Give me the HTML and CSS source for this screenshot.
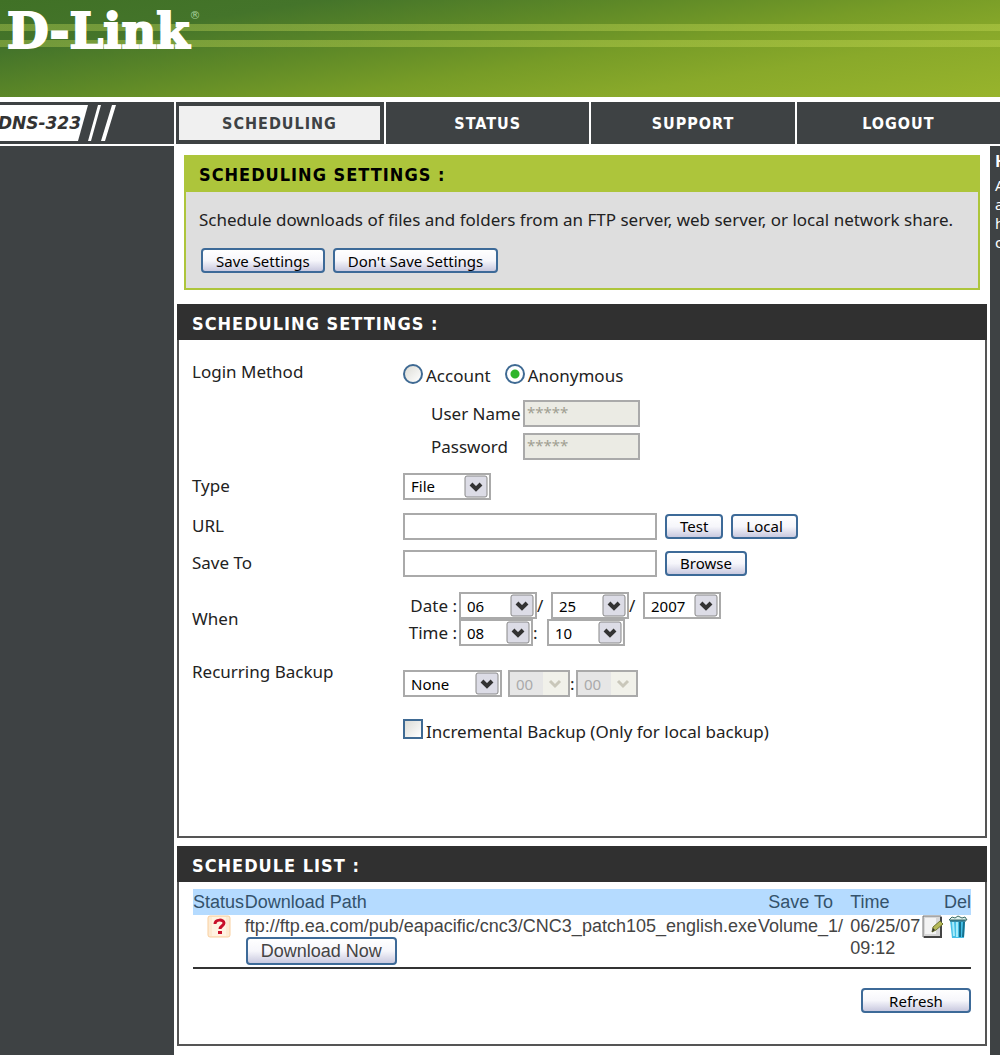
FILE: index.html
```
<!DOCTYPE html>
<html lang="en">
<head>
    <meta charset="UTF-8">
    <meta name="viewport" content="width=device-width, initial-scale=1.0">
    <title>DNS-323 Scheduling</title>
    <link rel="stylesheet" href="styles.css">
</head>
<body>
    <header class="banner">
        <div class="logo">D-Link<sup>®</sup></div>
    </header>

    <nav class="topnav">
        <div class="model">
            <span class="model-name">DNS-323</span>
            <svg class="slashes" width="32" height="42" viewBox="0 0 32 42">
                <path d="M10 3h3L3 39H0zM24 3h4L17 39h-4z" fill="#fff"/>
            </svg>
        </div>
        <a href="#" class="tab active">SCHEDULING</a>
        <a href="#" class="tab">STATUS</a>
        <a href="#" class="tab">SUPPORT</a>
        <a href="#" class="tab">LOGOUT</a>
    </nav>

    <div class="page">
        <div class="sidebar"></div>

        <main class="content">
            <section class="intro">
                <h1>SCHEDULING SETTINGS :</h1>
                <div class="intro-body">
                    <p>Schedule downloads of files and folders from an FTP server, web server, or local network share.</p>
                    <div class="buttons">
                        <button type="button" class="btn">Save Settings</button>
                        <button type="button" class="btn">Don't Save Settings</button>
                    </div>
                </div>
            </section>

            <section class="panel">
                <h2>SCHEDULING SETTINGS :</h2>
                <form class="settings">
                    <div class="row top">
                        <span class="label">Login Method</span>
                        <div class="stack">
                            <div class="line radios">
                                <input type="radio" name="login" id="account"><label for="account">Account</label>
                                <input type="radio" name="login" id="anonymous" checked><label for="anonymous">Anonymous</label>
                            </div>
                            <div class="line credentials">
                                <label for="user">User Name</label>
                                <input type="text" id="user" value="*****" disabled>
                            </div>
                            <div class="line credentials">
                                <label for="pass">Password</label>
                                <input type="text" id="pass" value="*****" disabled>
                            </div>
                        </div>
                    </div>
                    <div class="row">
                        <label class="label" for="type">Type</label>
                        <select id="type" class="w-type"><option>File</option></select>
                    </div>
                    <div class="row">
                        <label class="label" for="url">URL</label>
                        <div class="line buttons">
                            <input type="text" id="url" class="path">
                            <button type="button" class="btn">Test</button>
                            <button type="button" class="btn">Local</button>
                        </div>
                    </div>
                    <div class="row tight">
                        <label class="label" for="saveto">Save To</label>
                        <div class="line buttons">
                            <input type="text" id="saveto" class="path">
                            <button type="button" class="btn">Browse</button>
                        </div>
                    </div>
                    <div class="row medium">
                        <span class="label">When</span>
                        <div class="when">
                            <div class="line">
                                <label class="when-label" for="month">Date :</label>
                                <select id="month" class="w-date"><option>06</option></select>
                                <span class="sep">/</span>
                                <select aria-label="Day" class="w-date"><option>25</option></select>
                                <span class="sep">/</span>
                                <select aria-label="Year" class="w-date"><option>2007</option></select>
                            </div>
                            <div class="line">
                                <label class="when-label" for="hour">Time :</label>
                                <select id="hour" class="w-hour"><option>08</option></select>
                                <span class="sep">:</span>
                                <select aria-label="Minute" class="w-date"><option>10</option></select>
                            </div>
                        </div>
                    </div>
                    <div class="row top">
                        <label class="label" for="recur">Recurring Backup</label>
                        <div class="line recur">
                            <select id="recur" class="w-recur"><option>None</option></select>
                            <select aria-label="Recurring hour" class="w-small" disabled><option>00</option></select>
                            <span class="colon">:</span>
                            <select aria-label="Recurring minute" class="w-small" disabled><option>00</option></select>
                        </div>
                    </div>
                    <div class="row loose">
                        <span class="label"></span>
                        <div class="line check">
                            <input type="checkbox" id="incremental">
                            <label for="incremental">Incremental Backup (Only for local backup)</label>
                        </div>
                    </div>
                </form>
            </section>

            <section class="panel">
                <h2>SCHEDULE LIST :</h2>
                <div class="list">
                    <table>
                        <thead>
                            <tr>
                                <th class="c-status">Status</th>
                                <th>Download Path</th>
                                <th class="c-save">Save To</th>
                                <th class="c-time">Time</th>
                                <th class="c-edit"></th>
                                <th class="c-del">Del</th>
                            </tr>
                        </thead>
                        <tbody>
                            <tr>
                                <td class="c-status">
                                    <svg width="24" height="23" viewBox="0 0 24 23">
                                        <rect x="1" y="1" width="22" height="21" rx="2" fill="#fdebd3" stroke="#f9cf9f"/>
                                        <path d="M5 2h14v19H5z" fill="#fff3e2"/>
                                        <path d="M8 9c0-5 9-5 9-1 0 3-4 3-4 6" fill="none" stroke="#c8102a" stroke-width="3"/>
                                        <rect x="11" y="16" width="4" height="3" fill="#c8102a"/>
                                    </svg>
                                </td>
                                <td>
                                    ftp://ftp.ea.com/pub/eapacific/cnc3/CNC3_patch105_english.exe
                                    <button type="button" class="btn download">Download Now</button>
                                </td>
                                <td class="c-save">Volume_1/</td>
                                <td class="c-time">06/25/07 09:12</td>
                                <td class="c-edit">
                                    <svg width="21" height="24" viewBox="0 0 21 24">
                                        <path d="M1 1h18v21H1z" fill="#d8d8d8" stroke="#777"/>
                                        <path d="M3 3h11v16H3z" fill="#f3f3f3"/>
                                        <path d="M2 22h17V2" fill="none" stroke="#444" stroke-width="2"/>
                                        <path d="M10 17l1-5 7-6 3 3-7 6z" fill="#b5b857" stroke="#6e7430"/>
                                        <path d="M10 17l1-4 2 2z" fill="#333"/>
                                    </svg>
                                </td>
                                <td class="c-del">
                                    <svg width="20" height="24" viewBox="0 0 20 24">
                                        <path d="M2 5h15l-1 18H4z" fill="#45bfe6"/>
                                        <path d="M5 7l1 14M9 7v15" stroke="#a5ecfb" stroke-width="2"/>
                                        <path d="M12 7v15M16 7l-1 15" stroke="#15718f" stroke-width="2"/>
                                        <path d="M1 5l3-3 3 1 3-2 4 2 3-1 2 3z" fill="#dff2ee" stroke="#3c6d68"/>
                                        <path d="M2 6h16" stroke="#28535c"/>
                                    </svg>
                                </td>
                            </tr>
                        </tbody>
                    </table>
                    <div class="list-footer">
                        <button type="button" class="btn refresh">Refresh</button>
                    </div>
                </div>
            </section>
        </main>

        <aside class="hints">
            <h3>H</h3>
            <p>A<br>a<br>h<br>c</p>
        </aside>
    </div>
</body>
</html>
```
FILE: styles.css
```
* {
    box-sizing: border-box;
}
body {
    margin: 0;
    min-height: 100vh;
    display: flex;
    flex-direction: column;
    background-color: white;
    color: #222;
    font-family: Tahoma, "Noto Sans", sans-serif;
    font-size: 17px;
    line-height: 22px;
}
h1, h2, h3, p {
    margin: 0;
}

/* banner */
.banner {
    height: 97px;
    padding-left: 7px;
    background:
        linear-gradient(to bottom, transparent 24px, rgba(205, 225, 90, 0.35) 24px, rgba(205, 225, 90, 0.35) 31px, transparent 31px, transparent 40px, rgba(205, 225, 90, 0.35) 40px, rgba(205, 225, 90, 0.35) 47px, transparent 47px),
        linear-gradient(171deg, #407126 0%, #44742a 20%, #5e8927 40%, #779c27 58%, #89a92a 75%, #98b42c 100%);
}
.logo {
    display: flex;
    color: white;
    font-family: "DejaVu Serif", serif;
    font-size: 48px;
    font-weight: bold;
    line-height: 62px;
    -webkit-text-stroke: 2px white;
}
.logo sup {
    font-family: "DejaVu Sans", sans-serif;
    font-size: 11px;
    font-weight: normal;
    line-height: 32px;
    color: #a5cf9a;
    -webkit-text-stroke: 0;
}

/* top navigation */
.topnav {
    display: grid;
    grid-template-columns: 174px 208px repeat(3, 1fr);
    gap: 2px;
    height: 49px;
    padding: 5px 0 2px;
    background-color: white;
}
.model, .tab {
    background-color: #3e4244;
}
.model {
    display: flex;
    align-items: center;
    overflow: hidden;
}
.model-name {
    width: 88px;
    height: 36px;
    padding-right: 7px;
    display: flex;
    justify-content: flex-end;
    clip-path: polygon(0 0, 100% 0, 78px 100%, 0 100%);
    background-color: white;
    color: #333;
    font-family: Verdana, "DejaVu Sans", sans-serif;
    font-weight: bold;
    font-style: italic;
    line-height: 36px;
    white-space: nowrap;
}
.tab {
    display: flex;
    align-items: center;
    justify-content: center;
    padding-top: 2px;
    color: white;
    font-family: Tahoma, "DejaVu Sans Condensed", "DejaVu Sans", sans-serif;
    font-size: 16px;
    font-weight: bold;
    letter-spacing: 1px;
    text-decoration: none;
}
.tab.active {
    border: 4px solid #3e4244;
    border-left-width: 3px;
    background-color: #f0f0f0;
    color: #3e4244;
}

/* page columns */
.page {
    flex: 1;
    display: grid;
    grid-template-columns: 174px 1fr 10px;
    background-color: white;
}
.sidebar, .hints {
    background-color: #3e4244;
}
.hints {
    padding: 6px 0 0 5px;
    overflow: hidden;
    color: white;
    font-size: 15px;
    line-height: 19px;
}
.hints h3 {
    margin-bottom: 5px;
    font-size: 16px;
}
.content {
    padding: 9px 3px;
}

/* green box */
.intro {
    margin: 0 7px 14px;
    border: 2px solid #adc53b;
    background-color: #dedede;
}
h1, h2 {
    padding: 0 13px;
    font-family: Tahoma, "DejaVu Sans Condensed", "DejaVu Sans", sans-serif;
    font-size: 18px;
    letter-spacing: 1px;
    line-height: 35px;
}
h1 {
    background-color: #adc53b;
    color: black;
}
.intro-body {
    padding: 17px 13px 15px;
}
.intro-body p {
    margin-bottom: 17px;
}
.intro .buttons {
    padding-left: 2px;
}
.buttons {
    display: flex;
    align-items: center;
    gap: 8px;
}
.btn {
    height: 25px;
    padding: 0 13px;
    border: 2px solid #3d6a98;
    border-radius: 4px;
    background: linear-gradient(white, #f6f6fb 50%, #c9c9df);
    color: black;
    font-family: inherit;
    font-size: 15px;
    line-height: 20px;
}

/* dark panels */
.panel {
    margin-bottom: 8px;
    border: 2px solid #555;
}
.panel:last-child {
    margin-bottom: 0;
}
h2 {
    margin: -2px -2px 0;
    padding: 3px 15px 0;
    background-color: #303030;
    color: white;
    line-height: 33px;
}
.settings {
    padding: 18px 13px 91px;
}
.row {
    display: grid;
    grid-template-columns: 211px 1fr;
    align-items: center;
    margin-top: 12px;
}
.row.tight {
    margin-top: 9px;
}
.row.medium {
    margin-top: 15px;
}
.row.loose {
    margin-top: 22px;
}
.row.top {
    align-items: start;
}
.row:first-child {
    margin-top: 0;
}
.label {
    padding: 3px 0;
}
.line {
    display: flex;
    align-items: center;
}
.stack {
    display: flex;
    flex-direction: column;
    gap: 6px;
}
.radios {
    height: 36px;
}
.radios label {
    margin: 0 14px 0 3px;
}
.credentials {
    padding-left: 28px;
}
.credentials label {
    width: 92px;
}

input, select {
    margin: 0;
    font-family: inherit;
    font-size: 15px;
    color: black;
}
input[type="text"] {
    height: 27px;
    padding: 0 4px;
    border: 2px solid #aaa;
    border-radius: 0;
    background-color: white;
}
input[type="text"]:disabled {
    width: 117px;
    padding: 0 2px 4px;
    background-color: #ebebe4;
    color: #a09f92;
}
input.path {
    width: 254px;
}
input[type="radio"], input[type="checkbox"] {
    appearance: none;
    width: 20px;
    height: 20px;
    border: 2px solid #3f6a93;
    background: linear-gradient(135deg, #dcdcd6, white);
}
input[type="radio"] {
    border-radius: 50%;
    margin-bottom: 4px;
}
input[type="radio"]:checked {
    background: radial-gradient(circle, #2fb52c 3px, #2fb52c 4px, white 5px);
}
input[type="checkbox"] {
    margin: 0 3px 6px 0;
}
select {
    appearance: none;
    height: 27px;
    padding: 0 6px;
    border: 2px solid #aaa;
    border-radius: 0;
    background: white url("data:image/svg+xml,%3Csvg xmlns='http://www.w3.org/2000/svg' width='25' height='23'%3E%3Crect x='1' y='1' width='22' height='21' rx='2' fill='%23dcdce6' stroke='%23888'/%3E%3Cpath d='M7 9l5 5 5-5' fill='none' stroke='%23333' stroke-width='4'/%3E%3C/svg%3E") no-repeat right center;
}
select:disabled {
    background: #e6e6e6 url("data:image/svg+xml,%3Csvg xmlns='http://www.w3.org/2000/svg' width='25' height='23'%3E%3Crect width='25' height='23' fill='%23f1f1ea'/%3E%3Cpath d='M7 9l5 5 5-5' fill='none' stroke='%23c9c7ba' stroke-width='3'/%3E%3C/svg%3E") no-repeat right center;
    color: #aaa;
    opacity: 1;
}
.w-type {
    width: 88px;
}
.w-date {
    width: 78px;
}
.w-hour {
    width: 74px;
}
.w-recur {
    width: 99px;
    margin-right: 6px;
}
.w-small {
    width: 62px;
}
.when-label {
    width: 56px;
    padding-right: 2px;
    text-align: right;
}
.sep {
    width: 14px;
}
.colon {
    width: 6px;
}
.recur {
    padding-top: 12px;
}

/* schedule list */
.list {
    padding: 7px 14px 31px;
}
table {
    width: 100%;
    border-collapse: collapse;
    border-bottom: 2px solid #333;
    color: #444;
    font-family: Arial, "Liberation Sans", sans-serif;
    font-size: 18px;
}
thead {
    background-color: #b5dbff;
    color: #34526b;
}
th, td {
    padding: 0;
    font-weight: normal;
    text-align: left;
    vertical-align: top;
}
th {
    height: 26px;
    line-height: 26px;
}
td svg {
    display: block;
}
.c-status {
    width: 52px;
}
td.c-status {
    padding-left: 14px;
}
.c-save {
    width: 94px;
    padding-right: 6px;
    text-align: center;
}
.c-time {
    width: 73px;
}
.c-edit {
    width: 22px;
}
.c-del {
    width: 27px;
}
td.c-del {
    padding-left: 4px;
}
.btn.download {
    display: block;
    height: 28px;
    margin: 0 0 2px 1px;
    color: #444;
    font-size: 18px;
}
.list-footer {
    display: flex;
    justify-content: flex-end;
    padding-top: 19px;
}
.refresh {
    width: 110px;
}
```
